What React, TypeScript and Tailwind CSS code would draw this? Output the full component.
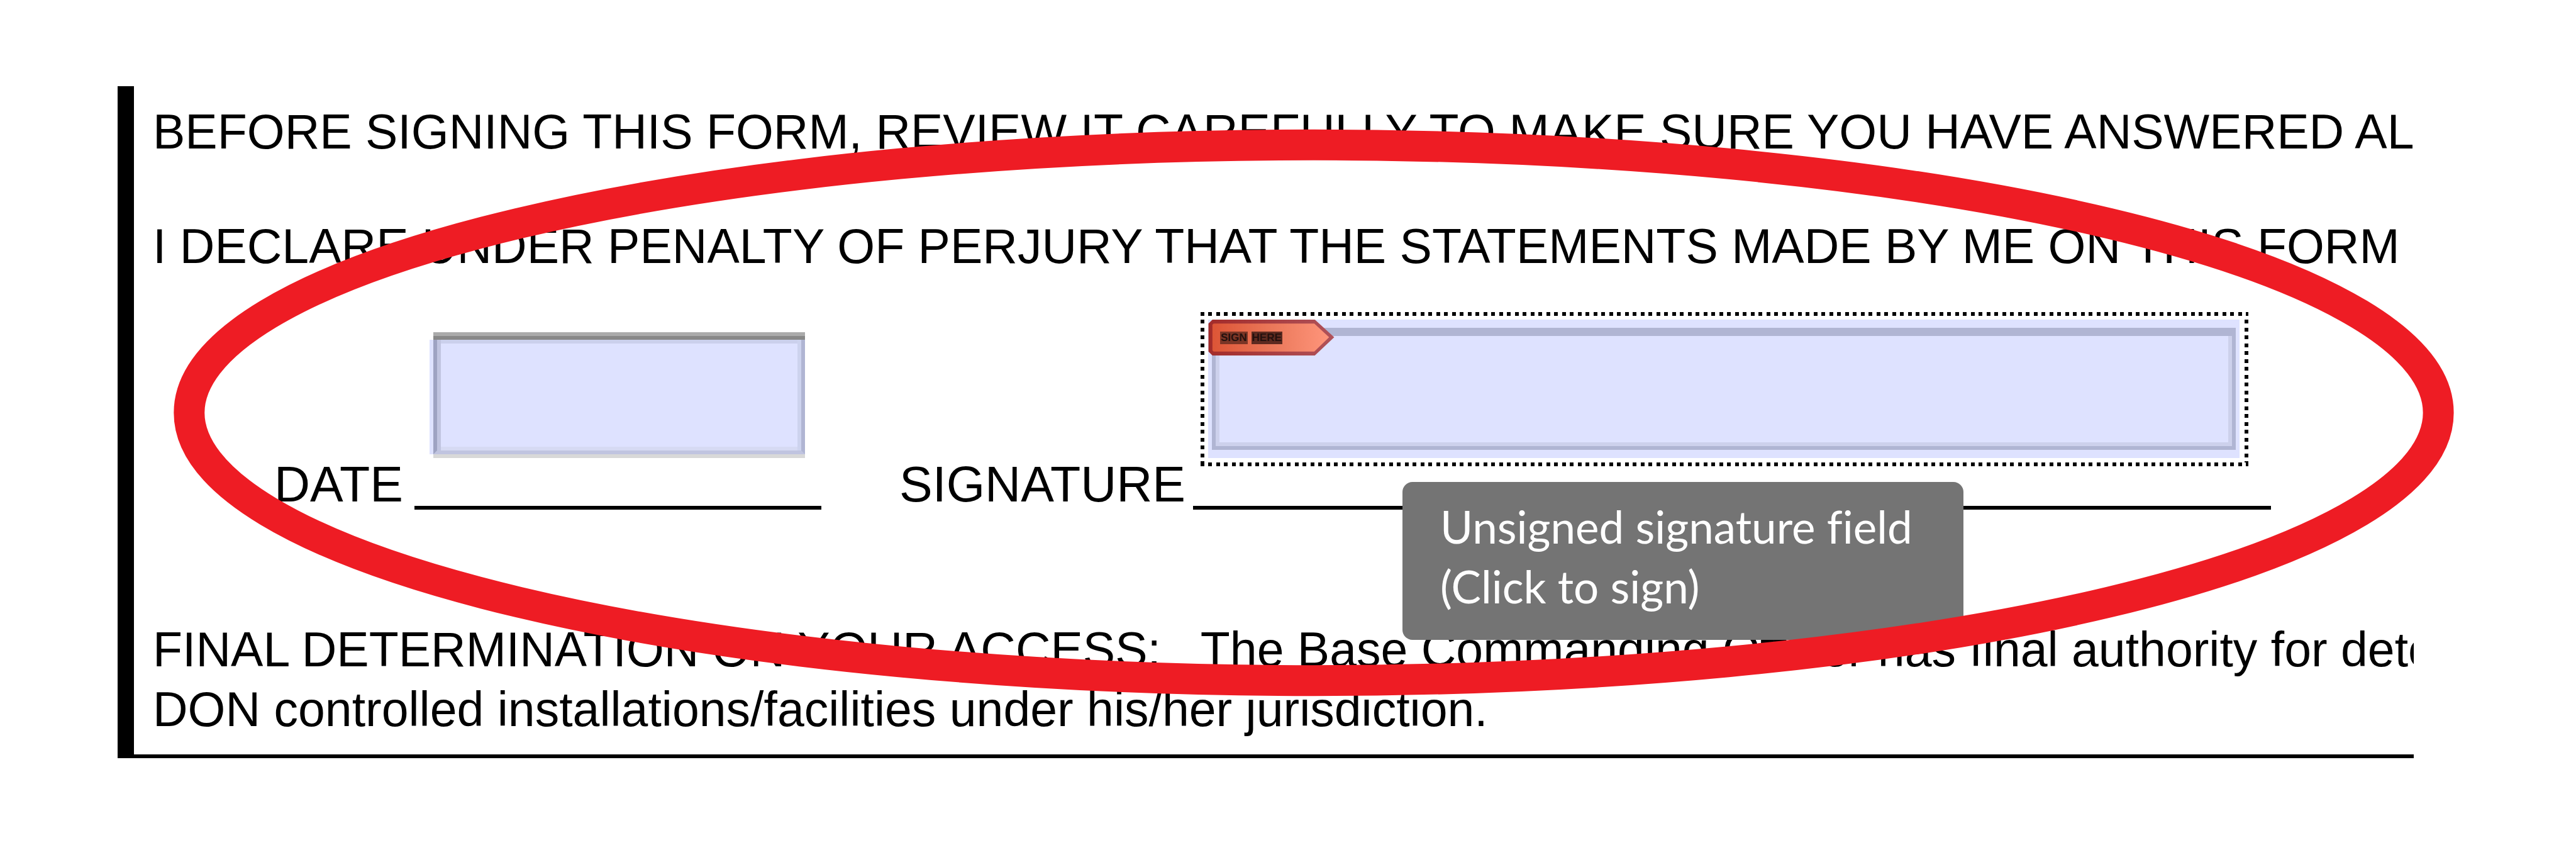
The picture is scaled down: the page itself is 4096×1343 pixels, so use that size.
const bodyText = 'whitespace-pre text-[77px] leading-[95px]';
const labelText = 'shrink-0 text-[79px] leading-[80px]';

const dotsAcross =
  'h-[6px] w-full bg-[repeating-linear-gradient(90deg,#000_0_6px,transparent_6px_12px,#000_12px_18px,transparent_18px_25px)]';
const dotsDown =
  'w-[6px] shrink-0 bg-[repeating-linear-gradient(180deg,transparent_0_6px,#000_6px_12px,transparent_12px_19px,#000_19px_25px)]';

function DateField() {
  return (
    <div className="mr-[26px] mb-[76px] ml-[24px]">
      <div className="ml-[6px] h-[6px] bg-[#ababab]" />
      <div className="ml-[6px] h-[6px] bg-[#888888]" />
      <div className="flex bg-[#dee2ff] pl-[6px]">
        <input
          id="date"
          type="text"
          className="h-[182px] w-full border-r-[6px] border-b-[6px] border-l-[6px] border-r-[#b0b5d3] border-b-[#c0c4e0] border-l-[#9ea3c2] bg-[#dee2ff] px-6 text-[79px] shadow-[inset_6px_0_#c0c4e0,inset_-6px_0_#cdd3ee,inset_0_6px_#cbd0ec,inset_0_-6px_#d6daf3] outline-none"
        />
      </div>
      <div className="ml-[6px] h-[6px] bg-[#d8d8d8]" />
    </div>
  );
}

function SignTag() {
  return (
    <span className="absolute top-0 left-0 flex h-[57px] w-[201px] items-center">
      <svg viewBox="0 0 221 63" className="absolute inset-0 h-full w-full" aria-hidden="true">
        <defs>
          <linearGradient id="tagFill" x1="0" x2="1" y1="0" y2="0">
            <stop offset="0" stopColor="#dd5536" />
            <stop offset="0.5" stopColor="#ea7759" />
            <stop offset="1" stopColor="#ff957b" />
          </linearGradient>
          <linearGradient id="tagEdge" x1="0" x2="1" y1="0" y2="0">
            <stop offset="0" stopColor="#a32c2a" />
            <stop offset="1" stopColor="#b0525a" />
          </linearGradient>
        </defs>
        <path d="M7 0H187L221 31L187 63H7L0 56V7Z" fill="url(#tagEdge)" />
        <path d="M9 7H186L212 31L186 56H9L7 54V9Z" fill="url(#tagFill)" />
      </svg>
      <span className="relative ml-[19px] flex gap-[6px] text-[17px] leading-[20px] font-black text-[#24100d]">
        <span className="bg-[#7a3526] px-px">SIGN</span>
        <span className="bg-[#5d2a20] px-px">HERE</span>
      </span>
    </span>
  );
}

function SignatureField() {
  return (
    <button id="signature" type="button" aria-describedby="signature-tip" className="mr-[36px] mb-[63px] ml-[12px] flex flex-col">
      <span className={dotsAcross} />
      <span className="flex w-full">
        <span className={dotsDown} />
        <span className="flex-1 pt-[6px] pr-[8px] pb-[7px] pl-[6px]">
          <span className="relative block bg-[#dee2ff] px-[6px] py-[13px]">
            <span className="block border-[6px] border-t-[13px] border-[#b0b5d3]">
              <span className="block h-[175px] border-x-[6px] border-b-[6px] border-[#cdd1ec]" />
            </span>
            <SignTag />
          </span>
        </span>
        <span className={dotsDown} />
      </span>
      <span className={dotsAcross} />
    </button>
  );
}

export default function App() {
  return (
    <main className='relative overflow-hidden bg-white pt-[137px] pr-[258px] pb-[137px] pl-[187px] font-["Liberation_Sans",Arial,sans-serif] text-black'>
      <form className="border-b-[6px] border-l-[26px] border-black pb-[24px] pl-[30px]">
        <p className={`${bodyText} overflow-hidden pt-[25px]`}>
          BEFORE SIGNING THIS FORM, REVIEW IT CAREFULLY TO MAKE SURE YOU HAVE ANSWERED AL
        </p>
        <p className={`${bodyText} mt-[87px] overflow-hidden`}>
          I DECLARE UNDER PENALTY OF PERJURY THAT THE STATEMENTS MADE BY ME ON THIS FORM
        </p>

        <div className="mb-[175px] flex items-end pr-[227px] pl-[193px]">
          <label htmlFor="date" className={`${labelText} w-[223px]`}>
            DATE
          </label>
          <div className="w-[647px] border-b-[6px] border-black">
            <DateField />
          </div>
          <label htmlFor="signature" className={`${labelText} ml-[124px] w-[467px]`}>
            SIGNATURE
          </label>
          <div className="relative mt-[57px] flex flex-1 flex-col border-b-[6px] border-black">
            <SignatureField />
            <div
              id="signature-tip"
              role="tooltip"
              className='absolute top-[270px] left-[333px] z-10 w-[892px] rounded-[16px] bg-[#747474] pt-[23px] pb-[38px] pl-[60px] font-["Lato",sans-serif] text-[71px] leading-[95px] text-white [font-variant-ligatures:none]'
            >
              Unsigned signature field
              <br />
              (Click to sign)
            </div>
          </div>
        </div>

        <div className="overflow-hidden">
          <p className={bodyText}>
            FINAL DETERMINATION ON YOUR ACCESS:{'   '}The Base Commanding Officer has final authority for dete
          </p>
          <p className={bodyText}>DON controlled installations/facilities under his/her jurisdiction.</p>
        </div>
      </form>

      <svg viewBox="0 0 4096 1343" className="pointer-events-none absolute inset-0 z-20 h-full w-full" aria-hidden="true">
        <ellipse cx="2089" cy="656.5" rx="1789.5" ry="426" fill="none" stroke="#ee1c24" strokeWidth="49" />
      </svg>
    </main>
  );
}
